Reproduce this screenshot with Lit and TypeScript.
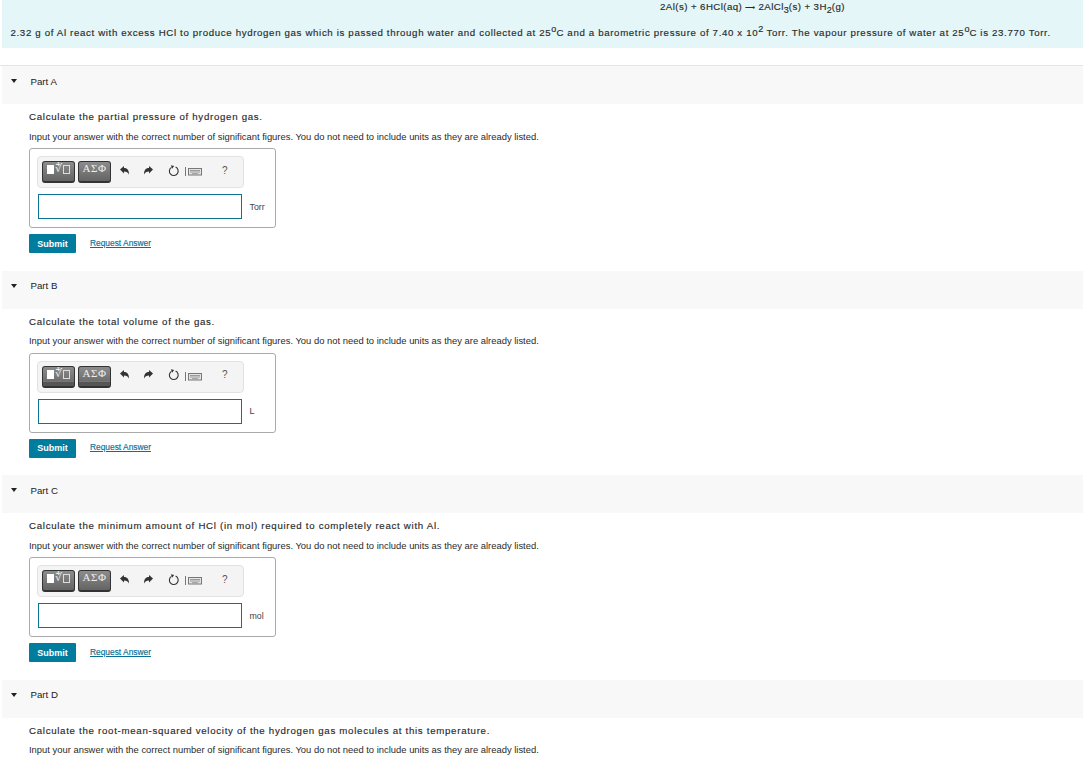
import { LitElement, html, css, svg } from "lit";
import { customElement } from "lit/decorators.js";

const parts = [
  { name: "Part A", q: "Calculate the partial pressure of hydrogen gas.", unit: "Torr", bar: false },
  { name: "Part B", q: "Calculate the total volume of the gas.", unit: "L", bar: true },
  { name: "Part C", q: "Calculate the minimum amount of HCl (in mol) required to completely react with Al.", unit: "mol", bar: false },
];
const hint = "Input your answer with the correct number of significant figures. You do not need to include units as they are already listed.";

const undo = svg`<path d="M0 3.6 4 0v2.1c3.6 0 5 2.5 5 6.4C8 6.4 6.7 5.4 4 5.4v2.1z" fill="#333"/>`;
const redo = svg`<path d="M9 3.6 5 0v2.1C1.4 2.1 0 4.6 0 8.5 1 6.4 2.3 5.4 5 5.4v2.1z" fill="#333"/>`;

@customElement("app-root")
export class AppRoot extends LitElement {
  static styles = css`
    :host { display: block; width: 1083px; height: 758px; overflow: hidden; background: #fff; font-family: "Liberation Sans", Arial, sans-serif; color: #222; }
    .intro { margin-left: 2px; height: 48px; background: #e4f6f7; display: flex; flex-direction: column; font-size: 9.7px; letter-spacing: 0.645px; color: #2a2a2a; -webkit-text-stroke: 0.15px #2a2a2a; }
    .eq { height: 14px; line-height: 14px; padding-left: 658px; white-space: nowrap; font-size: 9.7px; letter-spacing: 0.42px; }
    .arrow { font-size: 7px; letter-spacing: 0; }
    .stmt { margin-top: 12px; padding-left: 8.5px; line-height: 14px; white-space: nowrap; }
    sup { font-size: 9px; line-height: 0; vertical-align: 4px; letter-spacing: 0; }
    sub { font-size: 9px; line-height: 0; vertical-align: -3px; letter-spacing: 0; }
    .gap { height: 17px; border-bottom: 1px solid #e4e4e4; }
    .band { height: 38px; margin-left: 2px; background: #f8f8f8; display: flex; align-items: center; gap: 13px; padding: 0 0 8px 9px; font-size: 9.7px; color: #222; box-sizing: border-box; }
    .tri { width: 0; height: 0; border-left: 3.5px solid transparent; border-right: 3.5px solid transparent; border-top: 4px solid #222; }
    .label { margin-left: 0.5px; }
    .body { padding-left: 29px; height: 166.67px; box-sizing: border-box; }
    .q { padding-top: 6px; height: 13px; line-height: 13px; font-size: 9.7px; letter-spacing: 0.7px; color: #2a2a2a; white-space: nowrap; box-sizing: content-box; -webkit-text-stroke: 0.15px #2a2a2a; }
    .hint { margin-top: 6.5px; height: 14px; line-height: 14px; font-size: 9.42px; color: #2a2a2a; white-space: nowrap; }
    .box { margin-top: 4.5px; width: 247px; height: 80px; border: 1px solid #aaa; border-radius: 3px; padding: 7px 0 0 8px; box-sizing: border-box; }
    .tools { width: 207px; height: 32px; margin-left: -1px; box-sizing: border-box; background: #f4f4f4; border: 1px solid #e2e2e2; border-radius: 4px; display: flex; align-items: center; padding-left: 4px; }
    .tb { position: relative; overflow: hidden; width: 33px; height: 22px; box-sizing: border-box; border-radius: 3px; border: 1px solid #333; border-bottom-width: 2px; background: linear-gradient(#8c8c8c, #646464); color: #eee; font: 11px/12px "Liberation Serif", serif; display: flex; align-items: flex-start; justify-content: center; gap: 1px; }
    .tb + .tb { margin-left: 3px; }
    .tb.bar::after { content: ""; position: absolute; left: 0; right: 0; bottom: 0; height: 4px; background: #555; border-top: 1px solid #777; }
    .greek { letter-spacing: 0.5px; }
    .sq { width: 7px; height: 9px; background: #fff; margin-top: 3px; }
    .sqo { width: 5px; height: 7px; border: 1px solid #ddd; margin-top: 3px; }
    .i1 { margin: 0 0 4px 9px; }
    .i2 { margin: 0 0 4px 15px; }
    .i3 { margin: 0 0 3px 15px; }
    .i4 { margin: 0 0 1px 5px; }
    .qm { margin: 0 0 4px 20px; font-size: 10px; color: #555; }
    .row { display: flex; align-items: center; margin-top: 6px; }
    .input { width: 204px; height: 25px; box-sizing: border-box; border: 1px solid #0b7394; background: #fff; }
    .unit { margin-left: 7.5px; font-size: 8.8px; color: #444; }
    .actions { display: flex; align-items: center; margin-top: 6px; }
    .submit { width: 47px; height: 19px; background: #007c9e; color: #fff; font-size: 9px; font-weight: 700; display: flex; align-items: center; justify-content: center; border-radius: 1px; }
    .req { margin-left: 14px; margin-top: -2px; color: #0b6f94; font-size: 8.4px; text-decoration: underline; -webkit-text-stroke: 0.15px #0b6f94; }
  `;

  private part(p: { name: string; q: string; unit: string; bar: boolean }) {
    const bc = p.bar ? "tb bar" : "tb";
    return html`
      <div class="band"><span class="tri"></span><span class="label">${p.name}</span></div>
      <div class="body">
        <div class="q">${p.q}</div>
        <div class="hint">${hint}</div>
        <div class="box">
          <div class="tools">
            <div class=${bc}><span class="sq"></span><span>∜</span><span class="sqo"></span></div>
            <div class=${bc}><span class="greek">ΑΣΦ</span></div>
            <svg class="i1" width="9" height="9" viewBox="0 0 9 9">${undo}</svg>
            <svg class="i2" width="9" height="9" viewBox="0 0 9 9">${redo}</svg>
            <svg class="i3" width="12" height="12" viewBox="0 0 12 12"><path d="M7.6 2.1A4.4 4.4 0 1 1 3.4 2.4" fill="none" stroke="#333" stroke-width="1.1"/><path d="M3 .2 6.2 1 4 3.8z" fill="#333"/></svg>
            <svg class="i4" width="17" height="9" viewBox="0 0 17 9"><path d="M.5 0v9" stroke="#777"/><rect x="3.5" y="1.5" width="13" height="6.5" fill="#e4e4e4" stroke="#777"/><path d="M5 3.5h10M5 5h10M7 6.7h6" stroke="#888" stroke-width=".8"/></svg>
            <span class="qm">?</span>
          </div>
          <div class="row"><div class="input"></div><span class="unit">${p.unit}</span></div>
        </div>
        <div class="actions"><div class="submit">Submit</div><span class="req">Request Answer</span></div>
      </div>
    `;
  }

  render() {
    return html`
      <div class="intro">
        <div class="eq">2Al(s) + 6HCl(aq) <span class="arrow">⟶</span> 2AlCl<sub>3</sub>(s) + 3H<sub>2</sub>(g)</div>
        <div class="stmt">2.32 g of Al react with excess HCl to produce hydrogen gas which is passed through water and collected at 25<sup>o</sup>C and a barometric pressure of 7.40 x 10<sup>2</sup> Torr. The vapour pressure of water at 25<sup>o</sup>C is 23.770 Torr.</div>
      </div>
      <div class="gap"></div>
      ${parts.map((p) => this.part(p))}
      <div class="band"><span class="tri"></span><span class="label">Part D</span></div>
      <div class="body">
        <div class="q">Calculate the root-mean-squared velocity of the hydrogen gas molecules at this temperature.</div>
        <div class="hint">${hint}</div>
      </div>
    `;
  }
}
